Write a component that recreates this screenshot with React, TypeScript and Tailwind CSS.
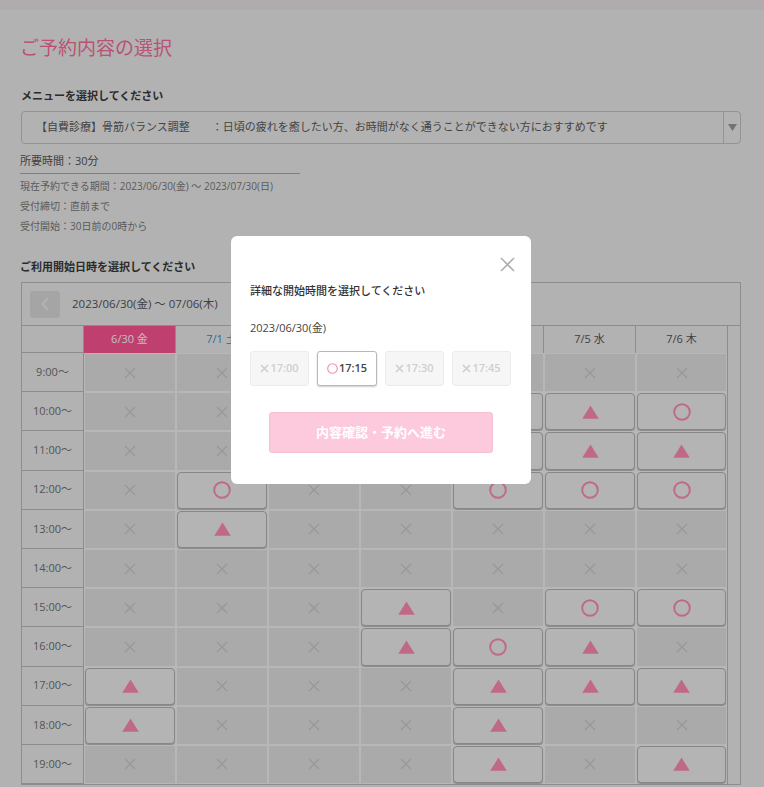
import React from "react";

const days = [
  { label: "6/30 金", kind: "sel" },
  { label: "7/1 土", kind: "sat" },
  { label: "7/2 日", kind: "sun" },
  { label: "7/3 月", kind: "n" },
  { label: "7/4 火", kind: "n" },
  { label: "7/5 水", kind: "n" },
  { label: "7/6 木", kind: "n" },
];

const times = ["9:00", "10:00", "11:00", "12:00", "13:00", "14:00", "15:00", "16:00", "17:00", "18:00", "19:00"];
const grid = [
  "xxxxxxx",
  "xxxxoto",
  "xxxxttt",
  "xoxxooo",
  "xtxxxxx",
  "xxxxxxx",
  "xxxtxoo",
  "xxxtotx",
  "txxxttt",
  "txxxtxx",
  "xxxxtxt",
];

function Cross() {
  return (
    <svg width="12" height="12" viewBox="0 0 12 12">
      <path d="M1 1L11 11M11 1L1 11" stroke="currentColor" strokeWidth="1.3" fill="none" />
    </svg>
  );
}

function Circle() {
  return (
    <svg width="18" height="18" viewBox="0 0 18 18">
      <circle cx="9" cy="9" r="7.8" fill="none" stroke="currentColor" strokeWidth="1.9" />
    </svg>
  );
}

function Tri() {
  return (
    <svg width="17" height="14" viewBox="0 0 17 14">
      <path d="M8.5 0.5L16.8 13.8H0.2Z" fill="currentColor" />
    </svg>
  );
}

function Cell({ v }: { v: string }) {
  if (v === "x") {
    return (
      <div className="flex h-full w-full items-center justify-center bg-[#e3e3e3] text-[#cbcbcb]">
        <Cross />
      </div>
    );
  }
  return (
    <div className="flex h-full w-full items-center justify-center rounded-[4px] border border-[#b5b5b5] bg-[#f1f1f1] text-[#ff8db4] shadow-[0_1px_1px_rgba(0,0,0,0.25)]">
      {v === "o" ? <Circle /> : <Tri />}
    </div>
  );
}

function Disabled({ t }: { t: string }) {
  return (
    <div className="flex h-[35px] w-[59px] items-center justify-center rounded-[3px] border border-[#ececec] bg-[#f6f6f6] text-[11px] font-semibold text-[#cfcfcf]">
      <svg width="9" height="9" viewBox="0 0 9 9" className="mr-[1px]">
        <path d="M1 1L8 8M8 1L1 8" stroke="#cfcfcf" strokeWidth="1.7" fill="none" />
      </svg>
      {t}
    </div>
  );
}

export default function App() {
  return (
    <div className="relative h-[787px] w-[764px] overflow-hidden bg-[#eeeeee] font-['Open_Sans','Noto_Sans_CJK_JP',sans-serif] text-[#444]">
      <div className="h-[10px] bg-[#ebe4e6]" />
      <div className="pl-[21px] pr-[23px]">
        <h1 className="mt-[24px] -ml-[1px] text-[19px] leading-[28px] font-normal text-[#f66f9d]">ご予約内容の選択</h1>

        <div className="mt-[24px] text-[11px] leading-[20px] font-bold text-[#3a3a3a]">メニューを選択してください</div>
        <div className="mt-[5px] flex h-[33px] items-stretch rounded-[4px] border border-[#c4c4c4]">
          <div className="flex flex-1 items-center pl-[14px] text-[11px] whitespace-pre text-[#5a5a5a]">
            【自費診療】骨筋バランス調整　　：日頃の疲れを癒したい方、お時間がなく通うことができない方におすすめです
          </div>
          <div className="flex w-[17px] items-center justify-center border-l border-[#c4c4c4]">
            <svg width="9" height="7" viewBox="0 0 9 7">
              <path d="M0 0H9L4.5 7Z" fill="#9a9a9a" />
            </svg>
          </div>
        </div>

        <div className="mt-[8px] w-[280px] -ml-[1px] border-b border-[#a8a8a8] pb-[3px] text-[11px] leading-[18px] text-[#555]">所要時間：30分</div>
        <div className="mt-[2px] -ml-[1px] text-[10px] leading-[20px] text-[#7a7a7a]">
          <div>現在予約できる期間：2023/06/30(金) ～ 2023/07/30(日)</div>
          <div>受付締切：直前まで</div>
          <div>受付開始：30日前の0時から</div>
        </div>

        <div className="mt-[21px] -ml-[1px] text-[11px] leading-[20px] font-bold text-[#3a3a3a]">ご利用開始日時を選択してください</div>

        <div className="mt-[5px] border border-[#bdbdbd]">
          <div className="flex h-[43px] items-center border-b border-[#bdbdbd] pl-[8px]">
            <div className="flex h-[27px] w-[30px] items-center justify-center rounded-[3px] bg-[#dcdcdc]">
              <svg width="8" height="14" viewBox="0 0 8 14">
                <path d="M7 1L1.5 7L7 13" stroke="#f4f4f4" strokeWidth="1.6" fill="none" />
              </svg>
            </div>
            <div className="ml-[12px] text-[11.5px] text-[#555]">2023/06/30(金) ～ 07/06(木)</div>
            <div className="ml-[14px] flex h-[27px] w-[30px] items-center justify-center rounded-[3px] border border-[#c8c8c8] bg-[#f6f6f6]">
              <svg width="8" height="14" viewBox="0 0 8 14">
                <path d="M1 1L6.5 7L1 13" stroke="#999" strokeWidth="1.6" fill="none" />
              </svg>
            </div>
          </div>

          <div className="flex">
            <div className="h-[27px] w-[62px] border-r border-b border-[#bdbdbd]" />
            {days.map((d) => (
              <div
                key={d.label}
                className={
                  "flex h-[27px] w-[92px] items-center justify-center border-r border-[#bdbdbd] text-[11px] " +
                  (d.kind === "sel"
                    ? "bg-[#ff5593] text-white"
                    : d.kind === "sat"
                    ? "text-[#3f8fcf]"
                    : d.kind === "sun"
                    ? "text-[#e25a5a]"
                    : "text-[#555]")
                }
              >
                {d.label}
              </div>
            ))}
          </div>

          {times.map((t, r) => (
            <div key={t} className="flex">
              <div className="flex h-[39.2px] w-[62px] items-center justify-center border-r border-b border-[#bdbdbd] text-[11px] text-[#707070]">
                {t}～
              </div>
              {grid[r].split("").map((v, c) => (
                <div
                  key={c}
                  className={"h-[39.2px] w-[92px] bg-[#f5f5f5] p-[1px] " + (c === 6 ? "border-r border-[#bdbdbd]" : "")}
                >
                  <Cell v={v} />
                </div>
              ))}
            </div>
          ))}
        </div>
      </div>

      <div className="absolute inset-0 bg-black/25" />

      <div className="absolute left-[231px] top-[236px] h-[248px] w-[300px] rounded-[6px] bg-white px-[19px] pt-[47px]">
        <div className="absolute right-[16px] top-[21px]">
          <svg width="15" height="15" viewBox="0 0 15 15">
            <path d="M1 1L14 14M14 1L1 14" stroke="#b0b0b0" strokeWidth="1.6" fill="none" />
          </svg>
        </div>
        <div className="text-[11px] leading-[16px] font-medium text-[#333]">詳細な開始時間を選択してください</div>
        <div className="mt-[21px] text-[11px] leading-[16px] text-[#444]">2023/06/30(金)</div>
        <div className="mt-[15px] flex gap-[8px]">
          <Disabled t="17:00" />
          <div className="flex h-[35px] w-[60px] items-center justify-center rounded-[3px] border border-[#b8b8b8] bg-white text-[11px] font-semibold text-[#444] shadow-[0_1px_2px_rgba(0,0,0,0.2)]">
            <svg width="11" height="11" viewBox="0 0 11 11" className="mr-[1px]">
              <circle cx="5.5" cy="5.5" r="4.8" fill="none" stroke="#ee8fb2" strokeWidth="1.1" />
            </svg>
            17:15
          </div>
          <Disabled t="17:30" />
          <Disabled t="17:45" />
        </div>
        <div className="mx-auto mt-[26px] flex h-[41px] w-[224px] items-center justify-center rounded-[3px] border border-[#f6bfd3] bg-[#fdc9dc] text-[13px] font-bold text-white">
          内容確認・予約へ進む
        </div>
      </div>
    </div>
  );
}
